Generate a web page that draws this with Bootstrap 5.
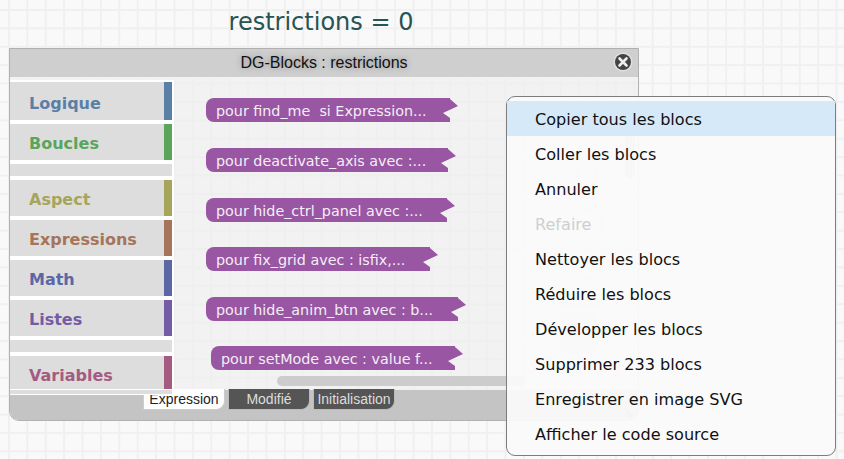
<!DOCTYPE html>
<html lang="fr">
<head>
<meta charset="utf-8">
<title>DG-Blocks</title>
<link rel="stylesheet" href="https://cdn.jsdelivr.net/npm/bootstrap@5.3.0/dist/css/bootstrap.min.css">
<style>
html,body{height:100%;margin:0}
body{width:844px;height:459px;overflow:hidden;position:relative;background-color:#f9f9f9;
 background-image:linear-gradient(#f0f0f0 2px,transparent 2px),linear-gradient(90deg,#f0f0f0 2px,transparent 2px);
 background-size:18.4px 18.4px;background-position:8px 9px;font-family:"DejaVu Sans",sans-serif}
.stage{width:630px;margin-left:9px}
.expr-title{height:48px;font-size:24px;line-height:44px;color:#275353;text-align:center;margin-left:-6px}
.dg-win{height:373px;border:1px solid #b0b0b0;border-radius:0 0 10px 10px;overflow:hidden;background:rgba(238,238,238,.72)}
.dg-head{height:30px;flex:none;background:#cfcfcf;border-bottom:2px solid #f2f2f2;font:16px/27px "Liberation Sans",Arial,sans-serif;color:#111;text-shadow:0 0 6px rgba(0,0,0,.35);text-align:center;position:relative}
.closer{position:absolute;right:5px;top:3px;width:20px;height:20px}
.dg-main{height:310px;flex:none;position:relative}
.dg-foot{height:31px;flex:none;background:#c4c4c4;border-top:1px solid #f0f0f0;position:relative}
.toolbox{position:absolute;left:0;top:1px;height:315px;width:164px;background:#fff;padding:2px 2px 1px 0;z-index:2;gap:4px}
.cat{background:#ddd;display:flex;flex:none;font-weight:700;font-size:16px;align-items:center;height:36px}
.cat b{flex:1;padding-left:19px;font-weight:700;padding-top:3px}
.cat i{display:block;width:8px;align-self:stretch}
.cat-first{height:38px}
.cat-first b{padding-top:5px}
.sep{background:#ddd;height:12px;flex:none}
.cat-last{height:33px;align-items:flex-start}
.cat-last b{padding-top:8px}
.tail{height:4px;background:#ddd;flex:none;margin-top:-3px}
.c1{color:#5b80a5}.c1 i{background:#5b80a5}
.c2{color:#5ba55b}.c2 i{background:#5ba55b}
.c3{color:#a5a55b}.c3 i{background:#a5a55b}
.c4{color:#a5745b}.c4 i{background:#a5745b}
.c5{color:#5b67a5}.c5 i{background:#5b67a5}
.c6{color:#745ba5}.c6 i{background:#745ba5}
.c7{color:#a55b80}.c7 i{background:#a55b80}
.blk{position:absolute;height:24px;background:#9856a3;color:#f4eef6;font-size:14.3px;line-height:26px;padding-left:10px;white-space:pre;border-radius:8px 0 0 8px;
 clip-path:polygon(0 0,calc(100% - 8px) 0,calc(100% - 8px) 1px,100% 8px,calc(100% - 15px) 15px,calc(100% - 8px) 20px,calc(100% - 8px) 100%,0 100%)}
.b1{left:196px;top:19px;width:252px}
.b2{left:196px;top:69px;width:250px}
.b3{left:196px;top:119px;width:249px}
.b4{left:196px;top:168px;width:232px}
.b5{left:196px;top:218px;width:260px}
.b6{left:201px;top:267px;width:252px}
.hbar{position:absolute;left:267px;top:297px;width:250px;height:10px;border-radius:5px;background:#ccc}
.vbar{position:absolute;left:615px;top:40px;width:10px;height:59px;border-radius:5px;background:#ccc}
.ghost{position:absolute;left:548px;top:90px;width:44px;height:190px;stroke:#d4d4d4;fill:none}
.grip{position:absolute;left:612px;top:14px;width:14px;height:16px;fill:#999}
.dg-tab{height:21px;width:82px;font:14px/21px "Liberation Sans",Arial,sans-serif;text-align:center;border-radius:0 0 9px 0;flex:none}
.tab-on{background:#fff;color:#222;border:1px solid #ccc;border-top:0}
.tab-off{background:#555;color:#ddd;border:1px solid #bbb;border-top:0}
.tabs{position:absolute;left:133px;top:-1px;gap:3px}
.ctx{position:absolute;left:506px;top:96px;width:330px;height:360px;border:1px solid #7d7d7d;border-radius:9px;background:rgba(250,250,250,.94);padding:4px 0;z-index:5}
.ctx-item{height:35px;padding-left:28px;font-size:16.1px;line-height:37px;color:#111}
.ctx-on{background:#d6e9f8}
.ctx-off{color:#cfcfcf}
</style>
</head>
<body>
<div class="stage">
  <div class="expr-title">restrictions = 0</div>
  <div class="dg-win d-flex flex-column">
    <div class="dg-head"><span>DG-Blocks : restrictions</span>
      <svg class="closer" viewBox="0 0 20 20"><circle cx="10" cy="10" r="9.5" fill="#e0e0e0"/><circle cx="10" cy="10" r="8" fill="#444"/><path d="M6.5 6.5l7 7M13.5 6.5l-7 7" stroke="#eee" stroke-width="2.6" stroke-linecap="round"/></svg>
    </div>
    <div class="dg-main">
      <div class="toolbox d-flex flex-column">
        <div class="cat cat-first c1"><b>Logique</b><i></i></div>
        <div class="cat c2"><b>Boucles</b><i></i></div>
        <div class="sep"></div>
        <div class="cat c3"><b>Aspect</b><i></i></div>
        <div class="cat c4"><b>Expressions</b><i></i></div>
        <div class="cat c5"><b>Math</b><i></i></div>
        <div class="cat c6"><b>Listes</b><i></i></div>
        <div class="sep"></div>
        <div class="cat cat-last c7"><b>Variables</b><i></i></div>
        <div class="tail"></div>
      </div>
      <div class="blk b1">pour find_me  si Expression...</div>
      <div class="blk b2">pour deactivate_axis avec :...</div>
      <div class="blk b3">pour hide_ctrl_panel avec :...</div>
      <div class="blk b4">pour fix_grid avec : isfix,...</div>
      <div class="blk b5">pour hide_anim_btn avec : b...</div>
      <div class="blk b6">pour setMode avec : value f...</div>
      <div class="hbar"></div>
      <div class="vbar"></div>
      <svg class="ghost" viewBox="0 0 44 190"><circle cx="29" cy="8" r="10"/><circle cx="29" cy="54" r="15"/><circle cx="29" cy="95" r="15"/><rect x="0" y="134" width="42" height="6" fill="#e2e2e2" stroke="none"/><rect x="3" y="143" width="36" height="42" fill="#e2e2e2" stroke="none"/></svg>
    </div>
    <div class="dg-foot">
      <div class="tabs d-flex">
        <div class="dg-tab tab-on">Expression</div>
        <div class="dg-tab tab-off">Modifié</div>
        <div class="dg-tab tab-off">Initialisation</div>
      </div>
      <svg class="grip" viewBox="0 0 14 16"><path d="M2 2l6 6-2 1 5 1-1 5-3-3-2 1z"/></svg>
    </div>
  </div>
</div>
<div class="ctx">
  <div class="ctx-item ctx-on">Copier tous les blocs</div>
  <div class="ctx-item">Coller les blocs</div>
  <div class="ctx-item">Annuler</div>
  <div class="ctx-item ctx-off">Refaire</div>
  <div class="ctx-item">Nettoyer les blocs</div>
  <div class="ctx-item">Réduire les blocs</div>
  <div class="ctx-item">Développer les blocs</div>
  <div class="ctx-item">Supprimer 233 blocs</div>
  <div class="ctx-item">Enregistrer en image SVG</div>
  <div class="ctx-item">Afficher le code source</div>
</div>
<script src="https://cdn.jsdelivr.net/npm/bootstrap@5.3.0/dist/js/bootstrap.bundle.min.js"></script>
</body>
</html>
